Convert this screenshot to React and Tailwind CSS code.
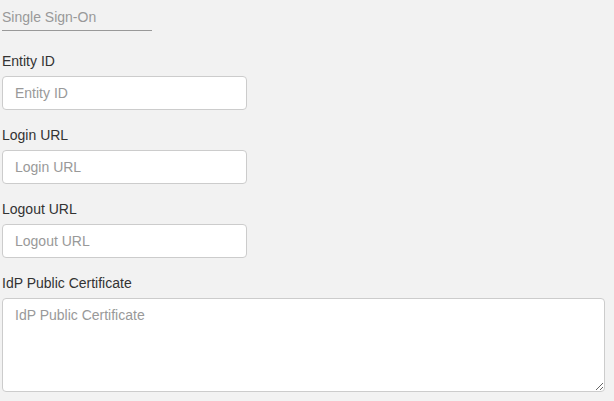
import React from 'react'

const fields = [
    { id: 'entityId', label: 'Entity ID' },
    { id: 'loginUrl', label: 'Login URL' },
    { id: 'logoutUrl', label: 'Logout URL' },
]

const App = () => {
    return (
        <div className="min-h-[401px] bg-[#f2f2f2] pl-[2px] pr-[9px] pt-[7px] text-[14px] text-[#333]" style={{ fontFamily: '"Liberation Sans", Arial, sans-serif' }}>
            <div className="w-[150px] border-b border-[#999] pb-[3px] leading-[20px] text-[#999]">Single Sign-On</div>

            <div className="mt-[20px]">
                {fields.map((f) => (
                    <div key={f.id} className="mb-[15px]">
                        <label className="block leading-[20px] mb-[5px]">{f.label}</label>
                        <input
                            type="text"
                            placeholder={f.label}
                            className="block h-[34px] w-[245px] rounded-[4px] border border-[#ccc] bg-white px-[12px] text-[14px] text-[#555] placeholder:text-[#999] outline-none"
                        />
                    </div>
                ))}

                <div>
                    <label className="block leading-[20px] mb-[5px]">IdP Public Certificate</label>
                    <textarea
                        placeholder="IdP Public Certificate"
                        className="block h-[94px] w-full rounded-[4px] border border-[#ccc] bg-white px-[12px] py-[6px] text-[14px] leading-[20px] text-[#555] placeholder:text-[#999] outline-none"
                    />
                </div>
            </div>
        </div>
    )
}

export default App
